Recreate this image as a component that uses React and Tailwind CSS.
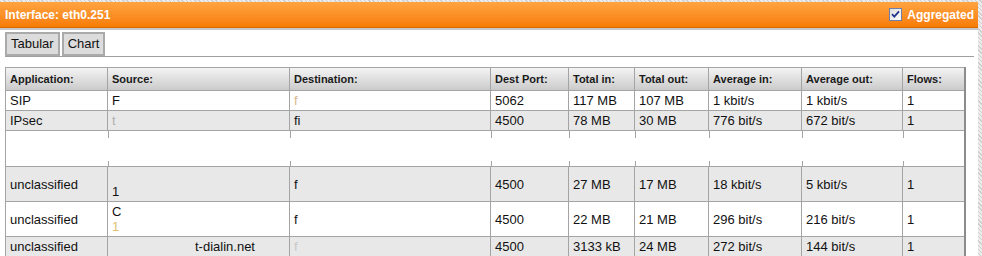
const COLS = [102, 182, 201, 78, 66, 74, 93, 101, 62];

const HEADERS = [
  "Application:",
  "Source:",
  "Destination:",
  "Dest Port:",
  "Total in:",
  "Total out:",
  "Average in:",
  "Average out:",
  "Flows:",
];

// rows (source / destination are partly blanked out like the capture)
const ROWS = [
  {
    app: "SIP",
    src: <span>F</span>,
    dst: <span className="text-[#d8b890]">f</span>,
    port: "5062",
    tin: "117 MB",
    tout: "107 MB",
    ain: "1 kbit/s",
    aout: "1 kbit/s",
    flows: "1",
    bg: "bg-white",
    h: "h-[20px]",
  },
  {
    app: "IPsec",
    src: <span className="text-[#b0b0b0]">t</span>,
    dst: <span>fi</span>,
    port: "4500",
    tin: "78 MB",
    tout: "30 MB",
    ain: "776 bit/s",
    aout: "672 bit/s",
    flows: "1",
    bg: "bg-[#e8e8e8]",
    h: "h-[20px]",
  },
  { blank: true },
  {
    app: "unclassified",
    src: (
      <span className="flex flex-col">
        <span className="text-[#c0c0c0]">&nbsp;</span>
        <span>1</span>
      </span>
    ),
    dst: <span>f</span>,
    port: "4500",
    tin: "27 MB",
    tout: "17 MB",
    ain: "18 kbit/s",
    aout: "5 kbit/s",
    flows: "1",
    bg: "bg-[#e8e8e8]",
    h: "h-[35px]",
  },
  {
    app: "unclassified",
    src: (
      <span className="flex flex-col">
        <span>C</span>
        <span className="text-[#e0c070]">1</span>
      </span>
    ),
    dst: <span>f</span>,
    port: "4500",
    tin: "22 MB",
    tout: "21 MB",
    ain: "296 bit/s",
    aout: "216 bit/s",
    flows: "1",
    bg: "bg-white",
    h: "h-[35px]",
  },
  {
    app: "unclassified",
    src: (
      <span>
        <span className="inline-block w-[83px]" />
        t-dialin.net
      </span>
    ),
    dst: <span className="text-[#c8c8c8]">f</span>,
    port: "4500",
    tin: "3133 kB",
    tout: "24 MB",
    ain: "272 bit/s",
    aout: "144 bit/s",
    flows: "1",
    bg: "bg-[#e8e8e8]",
    h: "h-[20px]",
  },
];

function Checkbox() {
  return (
    <svg width="13" height="13" viewBox="0 0 13 13">
      <defs>
        <linearGradient id="cb" x1="0" y1="0" x2="1" y2="1">
          <stop offset="0" stopColor="#dcdcdc" />
          <stop offset="1" stopColor="#ffffff" />
        </linearGradient>
      </defs>
      <rect x="0.5" y="0.5" width="12" height="12" fill="url(#cb)" stroke="#6f7fa8" />
      <path d="M3 6.2 L5.3 8.6 L10 3.4" fill="none" stroke="#26358c" strokeWidth="1.8" />
    </svg>
  );
}

export default function App() {
  const cell = "border border-[#a4a4a4] px-[4px] align-middle";

  return (
    <div className="w-[982px] h-[256px] overflow-hidden flex font-['Liberation_Sans',Arial,sans-serif] bg-[repeating-linear-gradient(45deg,#cfcfcf_0px,#cfcfcf_1px,#ececec_1px,#ececec_3px)]">
      <div className="w-[978px] mt-[2px] h-[254px] bg-white flex flex-col">
        {/* ============ HEADER ============ */}
        <div className="h-[26px] shrink-0 flex items-center justify-between pl-[5px] pr-[4px] bg-gradient-to-b from-[#ffa43e] to-[#f77c00] border-b border-[#d96a00]">
          <span className="text-[12px] font-bold text-white">Interface: eth0.251</span>
          <label className="flex items-center gap-[5px] text-[12px] font-bold text-white">
            <Checkbox />
            Aggregated
          </label>
        </div>
        <div className="h-[2px] shrink-0 bg-[#c8c8c8]" />

        {/* ============ TABS ============ */}
        <div className="mt-[2px] ml-[5px] mr-[4px] flex gap-[2px] border-b border-[#a0a0a0]">
          <button className="h-[24px] px-[4px] bg-[#dcdcdc] border-2 border-[#aaaaaa] text-[13px] text-[#111]">
            Tabular
          </button>
          <button className="h-[24px] px-[4px] bg-[#dcdcdc] border-2 border-[#aaaaaa] text-[13px] text-[#111]">
            Chart
          </button>
        </div>

        {/* ============ TABLE ============ */}
        <div className="mt-[10px] ml-[5px]">
          <table className="table-fixed border-collapse text-[#111] text-[13px] leading-[15px]">
            <colgroup>
              {COLS.map((w, i) => (
                <col key={i} style={{ width: w }} />
              ))}
            </colgroup>
            <thead>
              <tr className="h-[23px] bg-gradient-to-b from-[#f4f4f4] to-[#c9c9c9]">
                {HEADERS.map((h, i) => (
                  <th
                    key={h}
                    className={`${cell} text-left text-[11px] font-bold text-[#1a1a1a] ${
                      i === COLS.length - 1 ? "border-r-2 border-r-[#8c8c8c]" : ""
                    }`}
                  >
                    {h}
                  </th>
                ))}
              </tr>
            </thead>
            <tbody>
              {ROWS.map((r, idx) => {
                if (r.blank) {
                  return (
                    <tr key={idx} className="h-[35px] bg-white">
                      {COLS.map((w, i) => (
                        <td
                          key={i}
                          className={`p-0 border-y border-[#a4a4a4] ${
                            i === 0 ? "border-l" : "border-l-0"
                          } ${
                            i === COLS.length - 1
                              ? "border-r-2 border-r-[#8c8c8c]"
                              : "border-r-0"
                          }`}
                        >
                          <div className="h-[35px] flex flex-col justify-between">
                            <div className={`h-[7px] ${i > 0 ? "border-l border-[#a4a4a4]" : ""}`} />
                            <div className={`h-[5px] ${i > 0 ? "border-l border-[#a4a4a4]" : ""}`} />
                          </div>
                        </td>
                      ))}
                    </tr>
                  );
                }
                const vals = [r.app, r.src, r.dst, r.port, r.tin, r.tout, r.ain, r.aout, r.flows];
                return (
                  <tr key={idx} className={`${r.h} ${r.bg}`}>
                    {vals.map((v, i) => (
                      <td
                        key={i}
                        className={`${cell} ${
                          i === COLS.length - 1 ? "border-r-2 border-r-[#8c8c8c]" : ""
                        }`}
                      >
                        {v}
                      </td>
                    ))}
                  </tr>
                );
              })}
            </tbody>
          </table>
        </div>
      </div>
    </div>
  );
}
